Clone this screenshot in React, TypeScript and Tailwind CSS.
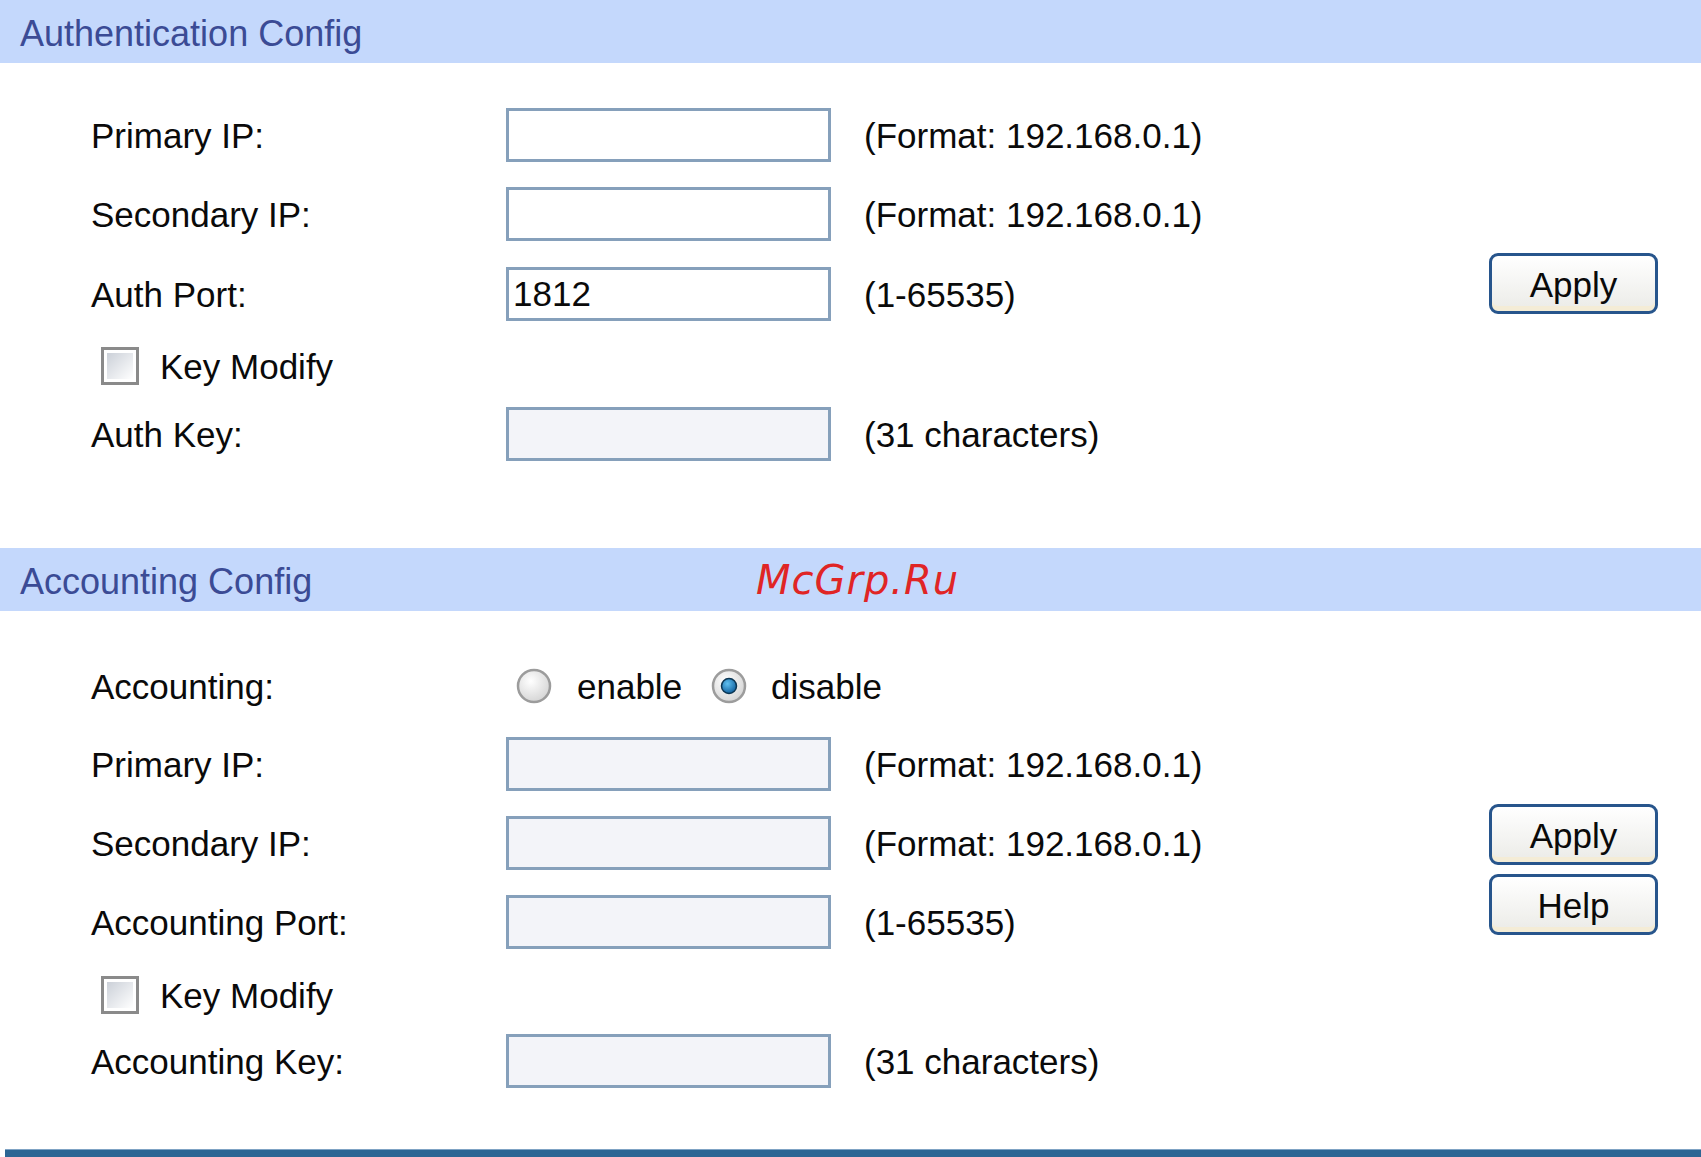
import React from "react";

const FONT = "font-[family-name:'Liberation_Sans',Arial,sans-serif]";

function Header({ title, children }: { title: string; children?: React.ReactNode }) {
  return (
    <div className="relative h-[63px] bg-[#c4d8fc] flex items-center pl-[20px] pt-[4px] text-[36px] leading-none text-[#3b4b95]">
      <span>{title}</span>
      {children}
    </div>
  );
}

function TextBox({ value = "", disabled = false }: { value?: string; disabled?: boolean }) {
  return (
    <input
      readOnly
      value={value}
      className={
        "w-[325px] h-[54px] border-[3px] border-[#86a0bb] pl-[4px] text-[35px] leading-none text-[#0a0a0a] outline-none " +
        (disabled ? "bg-[#f3f4f9]" : "bg-white")
      }
    />
  );
}

function Row({ label, value, hint, disabled }: { label: string; value?: string; hint: string; disabled?: boolean }) {
  return (
    <div className="flex items-center h-[54px]">
      <div className="w-[506px] pl-[91px]">{label}</div>
      <TextBox value={value} disabled={disabled} />
      <span className="ml-[33px]">{hint}</span>
    </div>
  );
}

function CheckBox() {
  return (
    <svg width="38" height="38" viewBox="0 0 38 38">
      <defs>
        <linearGradient id="cbg" x1="0" y1="0" x2="1" y2="1">
          <stop offset="0" stopColor="#cbd0d8" />
          <stop offset="1" stopColor="#ffffff" />
        </linearGradient>
      </defs>
      <rect x="1.5" y="1.5" width="35" height="35" fill="#ffffff" stroke="#8a8a8a" strokeWidth="3" />
      <rect x="6" y="6" width="26" height="26" fill="url(#cbg)" />
    </svg>
  );
}

function KeyModifyRow({ h }: { h: string }) {
  return (
    <div className={"flex items-center pl-[101px] " + h}>
      <CheckBox />
      <span className="ml-[21px]">Key Modify</span>
    </div>
  );
}

function Radio({ checked }: { checked?: boolean }) {
  return (
    <svg width="36" height="36" viewBox="0 0 36 36">
      <defs>
        <radialGradient id="rbg" cx="0.4" cy="0.35" r="0.7">
          <stop offset="0" stopColor="#ffffff" />
          <stop offset="1" stopColor="#d3d3d3" />
        </radialGradient>
        <radialGradient id="rdot" cx="0.4" cy="0.35" r="0.7">
          <stop offset="0" stopColor="#5fc0f0" />
          <stop offset="1" stopColor="#0e5c9a" />
        </radialGradient>
      </defs>
      <circle cx="18" cy="18" r="16" fill="url(#rbg)" stroke="#9c9c9c" strokeWidth="2.5" />
      {checked && <circle cx="18" cy="18" r="7.5" fill="url(#rdot)" stroke="#0b3552" strokeWidth="1.5" />}
    </svg>
  );
}

function Btn({ label }: { label: string }) {
  return (
    <button className="w-[169px] h-[61px] rounded-[9px] border-[3px] border-[#27558c] bg-gradient-to-b from-[#ffffff] to-[#ebebe7] shadow-[inset_0_-5px_0_#f4ecd6] text-[35px] leading-none text-[#0a0a0a] flex items-center justify-center pt-[2px]">
      {label}
    </button>
  );
}

export default function App() {
  return (
    <div className={"w-full min-h-screen bg-white text-[35px] leading-none text-[#0a0a0a] " + FONT}>
      <Header title="Authentication Config" />
      <div className="flex pt-[45px] pb-[87px]">
        <div className="flex-1 flex flex-col">
          <Row label="Primary IP:" hint="(Format: 192.168.0.1)" />
          <div className="mt-[25px]">
            <Row label="Secondary IP:" hint="(Format: 192.168.0.1)" />
          </div>
          <div className="mt-[26px]">
            <Row label="Auth Port:" value="1812" hint="(1-65535)" />
          </div>
          <div className="mt-[26px]">
            <KeyModifyRow h="h-[38px]" />
          </div>
          <div className="mt-[22px]">
            <Row label="Auth Key:" hint="(31 characters)" disabled />
          </div>
        </div>
        <div className="w-[169px] mr-[43px] flex flex-col justify-center pb-[2px]">
          <Btn label="Apply" />
        </div>
      </div>

      <Header title="Accounting Config">
        <span className="absolute left-[756px] top-1/2 -translate-y-1/2 font-[family-name:'DejaVu_Sans',sans-serif] italic text-[40px] tracking-[1px] text-[#e02525]">
          McGrp.Ru
        </span>
      </Header>
      <div className="flex pt-[48px] pb-[61px]">
        <div className="flex-1 flex flex-col">
          <div className="flex items-center h-[54px]">
            <div className="w-[506px] pl-[91px]">Accounting:</div>
            <div className="flex items-center pl-[10px]">
              <Radio />
              <span className="ml-[25px]">enable</span>
              <span className="ml-[29px] flex">
                <Radio checked />
              </span>
              <span className="ml-[24px]">disable</span>
            </div>
          </div>
          <div className="mt-[24px]">
            <Row label="Primary IP:" hint="(Format: 192.168.0.1)" disabled />
          </div>
          <div className="mt-[25px]">
            <Row label="Secondary IP:" hint="(Format: 192.168.0.1)" disabled />
          </div>
          <div className="mt-[25px]">
            <Row label="Accounting Port:" hint="(1-65535)" disabled />
          </div>
          <div className="mt-[28px]">
            <KeyModifyRow h="h-[36px]" />
          </div>
          <div className="mt-[21px]">
            <Row label="Accounting Key:" hint="(31 characters)" disabled />
          </div>
        </div>
        <div className="w-[169px] mr-[43px] flex flex-col justify-center gap-[9px] pb-[8px]">
          <Btn label="Apply" />
          <Btn label="Help" />
        </div>
      </div>
      <div className="ml-[5px] h-[8px] bg-[#2c6694] border-t border-[#7fa3c4]" />
    </div>
  );
}
